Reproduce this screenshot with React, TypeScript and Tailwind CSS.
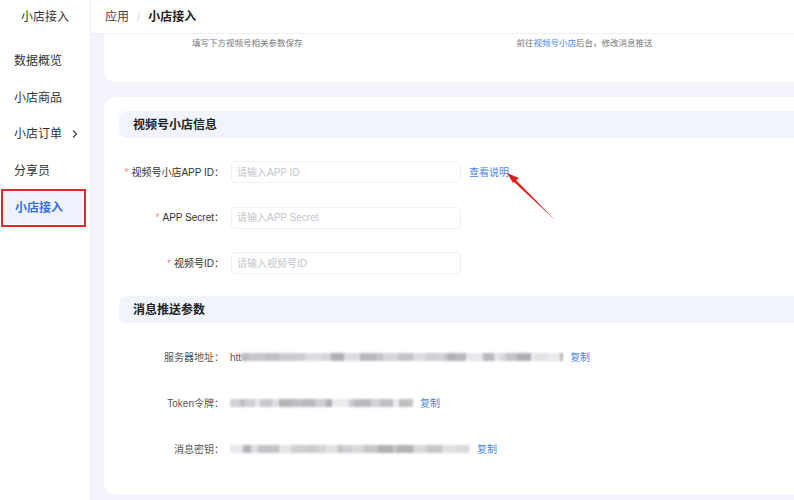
import React from "react";

const menu = [
  { text: "数据概览" },
  { text: "小店商品" },
  { text: "小店订单", arrow: true },
  { text: "分享员" },
];

const shopFields = [
  { label: "视频号小店APP ID：", placeholder: "请输入APP ID", help: true },
  { label: "APP Secret：", placeholder: "请输入APP Secret" },
  { label: "视频号ID：", placeholder: "请输入视频号ID" },
];

const pushFields = [
  { label: "服务器地址：", prefix: "htt", width: 322, seed: 3 },
  { label: "Token令牌：", prefix: "", width: 183, seed: 7 },
  { label: "消息密钥：", prefix: "", width: 240, seed: 11 },
];

// blurred mosaic standing in for the masked values
const Mosaic = ({ width, seed }: { width: number; seed: number }) => {
  let s = seed;
  const rnd = () => {
    s = (s * 9301 + 49297) % 233280;
    return s / 233280;
  };
  const cells: { w: number; c: number }[] = [];
  let total = 0;
  while (total < width) {
    const w = Math.min(width - total, 4 + Math.floor(rnd() * 14));
    cells.push({ w, c: 165 + Math.floor(rnd() * 70) });
    total += w;
  }
  return (
    <div className="flex h-[8px] blur-[0.8px] opacity-90">
      {cells.map((cell, i) => (
        <div
          key={i}
          style={{ width: cell.w, background: `rgb(${cell.c},${cell.c + 2},${cell.c + 5})` }}
        />
      ))}
    </div>
  );
};

const SectionTitle = ({ title }: { title: string }) => (
  <div className="ml-[15px] h-[27px] flex items-center pl-[14px] bg-[#f1f4fd] rounded-l-[8px] text-[12px] font-bold text-[#222]">
    {title}
  </div>
);

export default function App() {
  return (
    <div
      className="relative w-[794px] h-[500px] overflow-hidden flex bg-white"
      style={{ fontFamily: '"Liberation Sans", "Noto Sans CJK SC", sans-serif' }}
    >
      {/* sidebar */}
      <aside className="w-[91px] shrink-0 border-r border-[#eef0f5] bg-white">
        <div className="h-[34px] flex items-center justify-center text-[12px] text-[#333]">
          小店接入
        </div>
        <nav className="pt-[9px]">
          {menu.map((item, i) => (
            <div
              key={i}
              className="h-[36.5px] flex items-center pl-[14px] pr-[9px] text-[12px] text-[#333]"
            >
              <span className="flex-1">{item.text}</span>
              {item.arrow && (
                <svg width="8" height="10" viewBox="0 0 8 10" className="mr-[2px]">
                  <path d="M2 1.5 L5.5 5 L2 8.5" fill="none" stroke="#444" strokeWidth="1.3" />
                </svg>
              )}
            </div>
          ))}
          <div className="ml-[1px] w-[85px] h-[38px] border-2 border-[#e2262b] p-[1px]">
            <div className="h-full bg-[#eef3fd] rounded-[4px] flex items-center pl-[11px] text-[12px] font-bold text-[#3a6fe0]">
              小店接入
            </div>
          </div>
        </nav>
      </aside>

      {/* main */}
      <main className="flex-1 bg-[#f3f4fc] overflow-hidden">
        <header className="h-[34px] bg-white border-b border-[#eef0f5] flex items-center pl-[14px] text-[12px]">
          <span className="text-[#444]">应用</span>
          <span className="mx-[8px] text-[#d5d7de]">/</span>
          <span className="font-bold text-[#222]">小店接入</span>
        </header>

        <div className="ml-[13px] w-[720px] h-[48px] bg-white rounded-b-[12px] flex pt-[3px] text-[8.5px] text-[#777]">
          <span className="ml-[88px]">填写下方视频号相关参数保存</span>
          <span className="ml-[214px]">
            前往<span className="text-[#4a86e8]">视频号小店</span>后台，修改消息推送
          </span>
        </div>

        <section className="ml-[13px] mt-[15px] w-[720px] h-[397px] bg-white rounded-[12px] pt-[14px]">
          <SectionTitle title="视频号小店信息" />
          <div className="pt-[23px] flex flex-col gap-[23.5px]">
            {shopFields.map((f, i) => (
              <div key={i} className="flex items-center h-[22px]">
                <label className="w-[120px] text-right text-[10px] text-[#333]">
                  <span className="text-[#f08c8c] mr-[3px]">*</span>
                  {f.label}
                </label>
                <div className="ml-[7px] w-[230px] h-[22px] border border-[#f0f1f4] rounded-[4px] flex items-center pl-[5px] text-[10px] text-[#c3c6cd]">
                  {f.placeholder}
                </div>
                {f.help && (
                  <span className="ml-[8px] text-[10px] text-[#4a86e8]">查看说明</span>
                )}
              </div>
            ))}
          </div>

          <div className="mt-[22px]">
            <SectionTitle title="消息推送参数" />
          </div>
          <div className="pt-[23px] flex flex-col gap-[24px]">
            {pushFields.map((f, i) => (
              <div key={i} className="flex items-center h-[22px]">
                <label className="w-[120px] text-right text-[10px] text-[#555]">
                  {f.label}
                </label>
                <div className="ml-[6px] flex items-center text-[10px] text-[#555]">
                  {f.prefix && <span>{f.prefix}</span>}
                  <Mosaic width={f.width} seed={f.seed} />
                  <span className="ml-[7px] text-[#4a86e8]">复制</span>
                </div>
              </div>
            ))}
          </div>
        </section>
      </main>

      {/* red annotation arrow */}
      <svg
        className="absolute left-0 top-0 pointer-events-none"
        width="794"
        height="500"
        viewBox="0 0 794 500"
      >
        <polygon points="556,221 513,181 515,179" fill="#e0201f" />
        <polygon points="507,173 519,178 513,183" fill="#e0201f" />
      </svg>
    </div>
  );
}
